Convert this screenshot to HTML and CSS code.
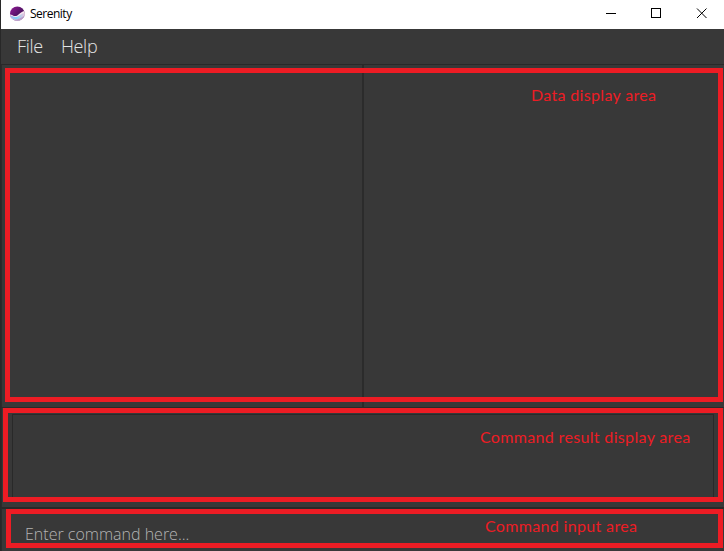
FILE: index.html
```html
<!DOCTYPE html>
<html lang="en">
<head>
<meta charset="utf-8">
<title>Serenity</title>
<link rel="stylesheet" href="styles.css">
</head>
<body>
<div class="window">
  <header class="titlebar">
    <svg class="logo" width="16" height="16" viewBox="0 0 16 16">
      <defs>
        <clipPath id="disc"><circle cx="8.300" cy="7.700" r="7.300"/></clipPath>
        <linearGradient id="purple" x1="0" y1="0" x2="1" y2="1"><stop offset="0" stop-color="#9a1c9c"/><stop offset=".6" stop-color="#4a1160"/><stop offset="1" stop-color="#391052"/></linearGradient>
        <linearGradient id="wave" x1="0" y1="0" x2="1" y2="0"><stop offset="0" stop-color="#b9a6ea"/><stop offset=".45" stop-color="#7ed2f6"/><stop offset="1" stop-color="#f0c6dc"/></linearGradient>
      </defs>
      <g clip-path="url(#disc)">
        <rect width="16" height="16" fill="url(#purple)"/>
        <path d="M0 8.500C3 8 4 10.500 7 10C10 9.500 11 5.500 16 5V16H0Z" fill="#f8e4ee"/>
        <path d="M0 9.500C3 9 4 11.300 7 11C10.500 10.500 12 7 16 7V11C12 11 10 14 6.500 13.500C3.500 13 2 12 0 12Z" fill="url(#wave)"/>
        <path d="M2 12.500C6 15 11 13 16 9V16H3Z" fill="#b89ccb"/>
      </g>
    </svg>
    <span class="title">Serenity</span>
    <svg class="controls" width="102" height="11" viewBox="0 0 102 11" fill="none" stroke="#000">
      <path d="M0 5.500H10"/>
      <rect x="45.500" y=".5" width="9" height="9"/>
      <path d="M91 .5L100.500 10M100.500 .5L91 10"/>
    </svg>
  </header>
  <nav class="menu"><span class="file">File</span><span class="help">Help</span></nav>
  <main class="data">
    <div class="pane"></div>
    <div class="pane"></div>
    <div class="frame"></div>
    <span class="note">Data display area</span>
  </main>
  <section class="result">
    <div class="output"></div>
    <div class="frame"></div>
    <span class="note">Command result display area</span>
  </section>
  <section class="command">
    <span class="prompt">Enter command here...</span>
    <div class="frame"></div>
    <span class="note">Command input area</span>
  </section>
</div>
</body>
</html>
```
FILE: styles.css
```css
* { box-sizing: border-box; }
body { margin: 0; background: #383838; overflow: hidden; }
.window {
  width: 724px;
  height: 551px;
  display: grid;
  grid-template-rows: 29px 36px 342px 100px 44px;
  background: #383838;
  border-left: 1px solid #282828;
}
.titlebar { display: flex; align-items: center; background: #fff; padding: 0 16px 2px 8px; }
.title { margin-left: 5px; font: 12px/16px "Open Sans", sans-serif; letter-spacing: -.5px; color: #000; }
.controls { margin-left: auto; }
.menu {
  display: flex;
  padding: 5px 16px 0;
  border-bottom: 1px solid #292929;
  font: 300 18px/24px "Open Sans", sans-serif;
  letter-spacing: -.3px;
  color: #e4e4e4;
}
.help { margin-left: 18px; }
.data, .result, .command { position: relative; border-left: 1px solid #2b2b2b; }
.data { display: flex; }
.pane { flex: 1; }
.pane:first-child { flex: 0 0 362px; border-right: 2px solid #2b2b2b; }
.result { border-top: 1px solid #292929; padding: 6px 10px 5px; }
.output { height: 88px; border: 1px solid #292929; border-bottom: 0; }
.command { border-top: 2px solid #282828; }
.frame { position: absolute; border: 5px solid #ed1c24; }
.data .frame { left: 3px; right: 1px; top: 3px; bottom: 5px; }
.result .frame { left: 1px; right: 1px; top: 0; bottom: 5px; }
.command .frame { left: 4px; right: 1px; top: 0; bottom: 3px; }
.note { position: absolute; font: 16px/20px Lato, sans-serif; letter-spacing: .34px; color: #ed1c24; white-space: nowrap; }
.data .note { left: 529px; top: 20px; }
.result .note { left: 478px; top: 19px; }
.command .note { left: 483px; top: 7px; }
.prompt { display: block; padding: 13px 0 0 23px; font: 300 16px/24px "Open Sans", sans-serif; color: #b4b4b4; }
```
